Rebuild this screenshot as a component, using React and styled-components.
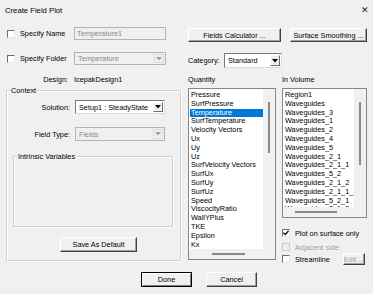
import styled, { createGlobalStyle } from 'styled-components';

const GlobalStyle = createGlobalStyle`
  html, body {
    margin: 0;
    padding: 0;
    background: #f0f0f0;
  }
  * {
    box-sizing: border-box;
  }
`;

const quantities = [
  'Pressure', 'SurfPressure', 'Temperature', 'SurfTemperature', 'Velocity Vectors',
  'Ux', 'Uy', 'Uz', 'SurfVelocity Vectors', 'SurfUx', 'SurfUy', 'SurfUz', 'Speed',
  'ViscocityRatio', 'WallYPlus', 'TKE', 'Epsilon', 'Kx',
];

const volumes = [
  'Region1', 'Waveguides', 'Waveguides_3', 'Waveguides_1', 'Waveguides_2', 'Waveguides_4',
  'Waveguides_5', 'Waveguides_2_1', 'Waveguides_2_1_1', 'Waveguides_5_2', 'Waveguides_2_1_2',
  'Waveguides_2_1_1_1', 'Waveguides_5_2_1', 'Waveguides_2_1_3',
];

function Combo({ value, disabled, width }) {
  return (
    <ComboBox $disabled={disabled} $width={width}>
      <ComboText>{value}</ComboText>
      <ComboArrow $disabled={disabled}>
        <svg width="6" height="4" viewBox="0 0 6 4">
          <path d="M0 0 H6 L3 3.5 Z" fill={disabled ? '#a0a0a0' : '#000'} />
        </svg>
      </ComboArrow>
    </ComboBox>
  );
}

function Check({ checked, disabled, label }) {
  return (
    <CheckLabel $disabled={disabled}>
      <CheckBox $disabled={disabled}>
        {checked && (
          <svg width="6" height="6" viewBox="0 0 6 6">
            <path d="M0.5 2.8 L2.3 4.6 L5.5 0.8" stroke="#000" strokeWidth="1.3" fill="none" />
          </svg>
        )}
      </CheckBox>
      {label}
    </CheckLabel>
  );
}

function ListBox({ items, selected, height, thumbTop, thumbLen, hThumbLeft, hThumbLen }) {
  return (
    <List $height={height}>
      <ListItems>
        {items.map((item) => (
          <ListItem key={item} $selected={item === selected}>{item}</ListItem>
        ))}
      </ListItems>
      <VScroll>
        <VThumb $top={thumbTop} $len={thumbLen} />
      </VScroll>
      <HScroll>
        <HThumb $left={hThumbLeft} $len={hThumbLen} />
      </HScroll>
      <Corner />
    </List>
  );
}

export default function App() {
  return (
    <>
      <GlobalStyle />
      <Dialog>
        <TitleBar>
          <Title>Create Field Plot</Title>
          <Close>✕</Close>
        </TitleBar>
        <Body>
          <LeftColumn>
            <FormRow $top={7}>
              <Check label="Specify Name" />
              <TextInput>Temperature1</TextInput>
            </FormRow>
            <FormRow $top={12}>
              <Check label="Specify Folder" />
              <Combo value="Temperature" disabled width={92} />
            </FormRow>
            <DesignRow>
              <RightLabel>Design:</RightLabel>
              <span>IcepakDesign1</span>
            </DesignRow>
            <GroupBox $top={5} $height={171}>
              <Legend>Context</Legend>
              <ContextRow $top={5}>
                <RightLabel>Solution:</RightLabel>
                <Combo value="Setup1 : SteadyState" width={90} />
              </ContextRow>
              <ContextRow $top={13}>
                <RightLabel>Field Type:</RightLabel>
                <Combo value="Fields" disabled width={90} />
              </ContextRow>
              <GroupBox $top={15} $height={71} $left={6} $width={160}>
                <Legend>Intrinsic Variables</Legend>
              </GroupBox>
              <Button $width={77} $height={15} $top={10} $left={53}>Save As Default</Button>
            </GroupBox>
          </LeftColumn>

          <RightColumn>
            <ButtonRow>
              <Button $width={93} $height={14}>Fields Calculator ...</Button>
              <Button $width={77} $height={14}>Surface Smoothing ...</Button>
            </ButtonRow>
            <CategoryRow>
              <span>Category:</span>
              <Combo value="Standard" width={58} />
            </CategoryRow>
            <ListsGrid>
              <ListLabel>Quantity</ListLabel>
              <ListLabel>In Volume</ListLabel>
              <ListBox
                items={quantities}
                selected="Temperature"
                height={172}
                thumbTop={13}
                thumbLen={51}
                hThumbLeft={23}
                hThumbLen={33}
              />
              <VolumeCell>
                <ListBox
                  items={volumes}
                  height={130}
                  thumbTop={13}
                  thumbLen={63}
                  hThumbLeft={12}
                  hThumbLen={42}
                />
                <OptionRow $top={10}>
                  <Check checked label="Plot on surface only" />
                </OptionRow>
                <OptionRow $top={4}>
                  <Check disabled label="Adjacent side" />
                </OptionRow>
                <OptionRow $top={1} $height={12}>
                  <Check label="Streamline" />
                  <Button $width={22} $height={12} $disabled $push>Edit ...</Button>
                </OptionRow>
              </VolumeCell>
            </ListsGrid>
          </RightColumn>
        </Body>
        <Footer>
          <Button $width={51} $height={15} $default>Done</Button>
          <Button $width={51} $height={15}>Cancel</Button>
        </Footer>
      </Dialog>
    </>
  );
}

const Dialog = styled.div`
  width: 373px;
  height: 294px;
  background: #f0f0f0;
  font-family: "Liberation Sans", Arial, sans-serif;
  font-size: 7.3px;
  color: #000;
  overflow: hidden;
`;

const TitleBar = styled.div`
  height: 20px;
  display: flex;
  align-items: center;
  justify-content: space-between;
  padding: 0 4px 0 5px;
`;

const Title = styled.span`
  font-size: 7.7px;
`;

const Close = styled.span`
  font-size: 9px;
  color: #222;
`;

const Body = styled.div`
  display: grid;
  grid-template-columns: 175px 179px;
  column-gap: 7px;
  padding: 0 6px;
  height: 245px;
`;

const LeftColumn = styled.div`
  display: flex;
  flex-direction: column;
`;

const RightColumn = styled.div`
  display: flex;
  flex-direction: column;
`;

const FormRow = styled.div`
  display: grid;
  grid-template-columns: 67px 92px;
  align-items: center;
  height: 13px;
  margin-top: ${({ $top }) => $top}px;
  padding-left: 1px;
`;

const DesignRow = styled.div`
  display: grid;
  grid-template-columns: 62px auto;
  column-gap: 6px;
  align-items: center;
  height: 12px;
  margin-top: 8px;
`;

const RightLabel = styled.span`
  text-align: right;
`;

const CheckLabel = styled.label`
  display: flex;
  align-items: center;
  gap: 5px;
  white-space: nowrap;
  color: ${({ $disabled }) => ($disabled ? '#a0a0a0' : '#000')};
`;

const CheckBox = styled.span`
  width: 8px;
  height: 8px;
  flex: none;
  display: flex;
  align-items: center;
  justify-content: center;
  background: ${({ $disabled }) => ($disabled ? '#f0f0f0' : '#fff')};
  border: 1px solid;
  border-color: ${({ $disabled }) => ($disabled ? '#c8c8c8' : '#6e6e6e #e8e8e8 #e8e8e8 #6e6e6e')};
`;

const TextInput = styled.div`
  height: 13px;
  border: 1px solid #b4b4b4;
  background: #f0f0f0;
  color: #8a8a8a;
  padding-left: 2px;
  line-height: 11px;
`;

const ComboBox = styled.div`
  width: ${({ $width }) => $width}px;
  height: 100%;
  display: flex;
  align-items: center;
  border: 1px solid;
  border-color: ${({ $disabled }) => ($disabled ? '#b4b4b4' : '#7a7a7a #dcdcdc #dcdcdc #7a7a7a')};
  background: ${({ $disabled }) => ($disabled ? '#f0f0f0' : '#fff')};
  color: ${({ $disabled }) => ($disabled ? '#8a8a8a' : '#000')};
  padding: 1px;
`;

const ComboText = styled.span`
  flex: 1;
  padding-left: 2px;
  white-space: nowrap;
  overflow: hidden;
`;

const ComboArrow = styled.span`
  width: 10px;
  height: 100%;
  display: flex;
  align-items: center;
  justify-content: center;
  background: #f0f0f0;
  border: 1px solid;
  border-color: ${({ $disabled }) => ($disabled ? '#dcdcdc' : '#fff #6e6e6e #6e6e6e #fff')};
`;

const GroupBox = styled.div`
  display: flex;
  flex-direction: column;
  border: 1px solid #d2d2d2;
  box-shadow: inset 1px 1px 0 #fff, 1px 1px 0 #fff;
  margin-top: ${({ $top }) => $top}px;
  margin-left: ${({ $left = 0 }) => $left}px;
  width: ${({ $width }) => ($width ? `${$width}px` : 'auto')};
  height: ${({ $height }) => $height}px;
`;

const Legend = styled.span`
  align-self: flex-start;
  margin: -5px 0 0 3px;
  padding: 0 1px;
  height: 9px;
  line-height: 9px;
  background: #f0f0f0;
`;

const ContextRow = styled.div`
  display: grid;
  grid-template-columns: 63px 90px;
  column-gap: 5px;
  align-items: center;
  height: 14px;
  margin-top: ${({ $top }) => $top}px;
`;

const Button = styled.div`
  width: ${({ $width }) => $width}px;
  height: ${({ $height }) => $height}px;
  margin-top: ${({ $top = 0 }) => $top}px;
  margin-left: ${({ $left, $push }) => ($push ? 'auto' : `${$left || 0}px`)};
  margin-right: ${({ $push }) => ($push ? '2px' : '0')};
  display: flex;
  align-items: center;
  justify-content: center;
  white-space: nowrap;
  background: #f0f0f0;
  color: ${({ $disabled }) => ($disabled ? '#a0a0a0' : '#000')};
  border: 1px solid;
  border-color: ${({ $default }) => ($default ? '#000' : '#fff #404040 #404040 #fff')};
  box-shadow: ${({ $default }) => ($default ? 'inset 1px 1px 0 #fff, inset -1px -1px 0 #808080' : 'inset -1px -1px 0 #a0a0a0')};
`;

const ButtonRow = styled.div`
  display: flex;
  gap: 9px;
  margin-top: 8px;
`;

const CategoryRow = styled.div`
  display: grid;
  grid-template-columns: 36px 58px;
  align-items: center;
  height: 15px;
  margin-top: 11px;
`;

const ListsGrid = styled.div`
  display: grid;
  grid-template-columns: 88px 85px;
  column-gap: 6px;
  grid-template-rows: 9px auto;
  row-gap: 4px;
  margin-top: 7px;
`;

const ListLabel = styled.span`
  line-height: 9px;
`;

const VolumeCell = styled.div`
  display: flex;
  flex-direction: column;
`;

const List = styled.div`
  height: ${({ $height }) => $height}px;
  display: grid;
  grid-template-columns: 1fr 12px;
  grid-template-rows: 1fr 10px;
  border: 1px solid #828790;
  background: #fff;
`;

const ListItems = styled.div`
  overflow: hidden;
  padding: 2px 0 0 1px;
`;

const ListItem = styled.div`
  height: 8.8px;
  line-height: 8.8px;
  padding-left: 1px;
  white-space: nowrap;
  background: ${({ $selected }) => ($selected ? '#0078d7' : 'transparent')};
  color: ${({ $selected }) => ($selected ? '#fff' : '#000')};
`;

const VScroll = styled.div`
  background: #f0f0f0;
  display: flex;
  justify-content: center;
`;

const VThumb = styled.div`
  width: 2px;
  height: ${({ $len }) => $len}px;
  margin-top: ${({ $top }) => $top}px;
  background: #8a8a8a;
`;

const HScroll = styled.div`
  background: #f0f0f0;
  display: flex;
  align-items: center;
`;

const HThumb = styled.div`
  height: 2px;
  width: ${({ $len }) => $len}px;
  margin-left: ${({ $left }) => $left}px;
  background: #8a8a8a;
`;

const Corner = styled.div`
  background: #f0f0f0;
`;

const OptionRow = styled.div`
  display: flex;
  align-items: center;
  height: ${({ $height = 10 }) => $height}px;
  margin-top: ${({ $top }) => $top}px;
`;

const Footer = styled.div`
  display: flex;
  gap: 14px;
  padding-left: 141px;
  margin-top: 7px;
`;
